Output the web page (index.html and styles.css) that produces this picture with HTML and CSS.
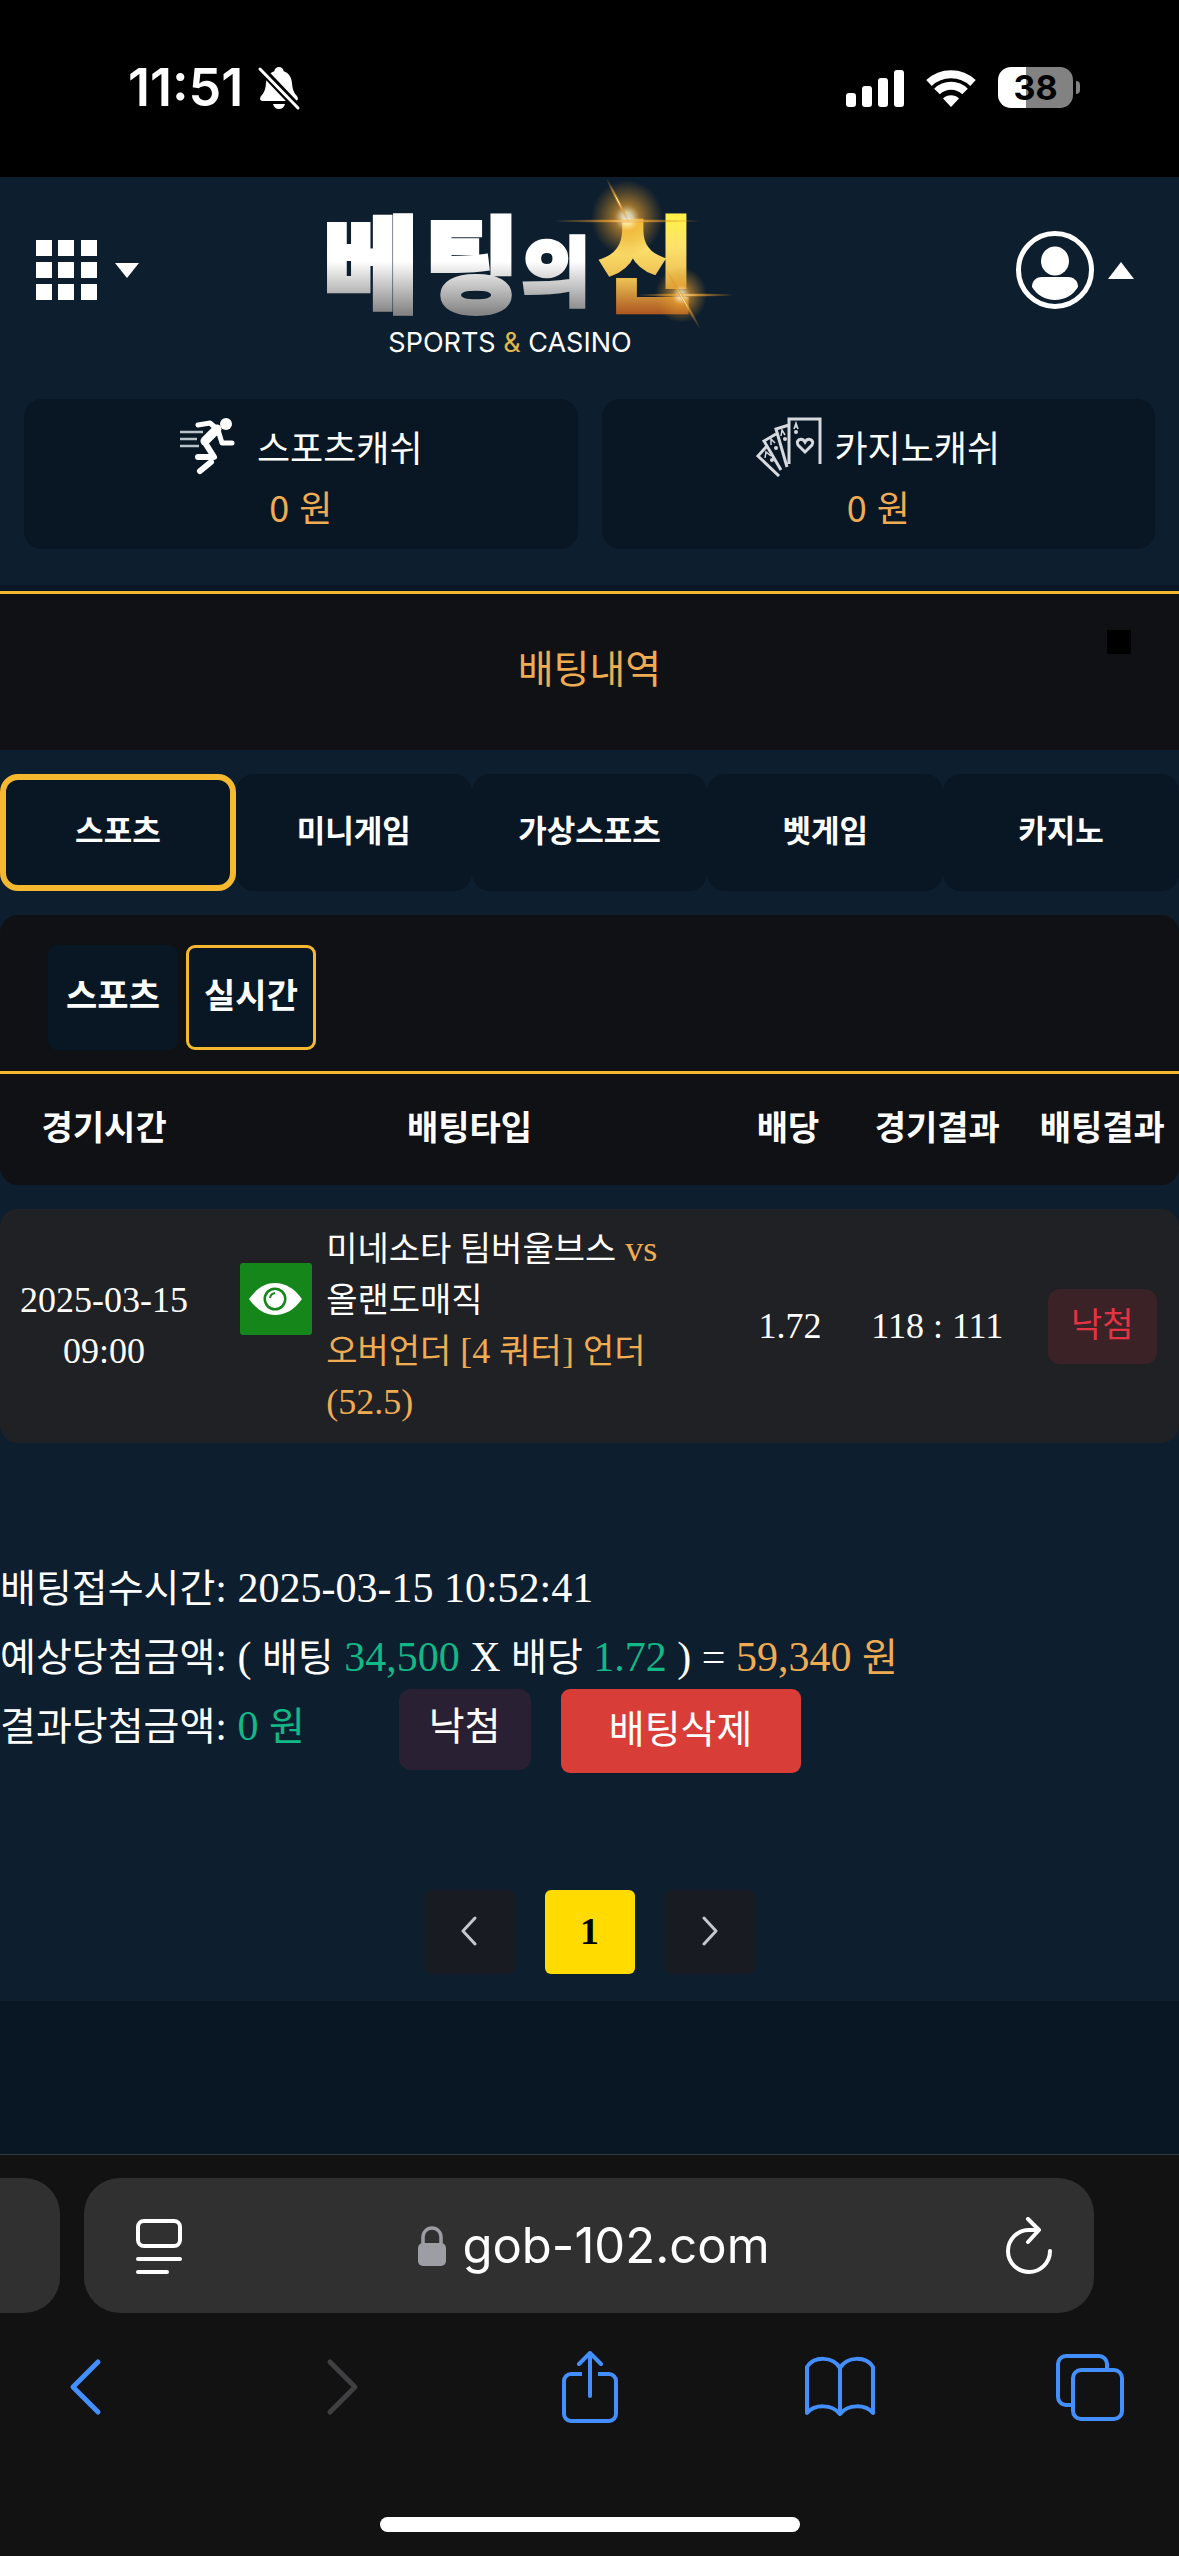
FILE: index.html
```html
<!DOCTYPE html>
<html lang="ko">
<head>
<meta charset="utf-8">
<meta name="viewport" content="width=device-width">
<title>배팅내역</title>
<link rel="stylesheet" href="styles.css">
</head>
<body>
<div class="status">
  <div class="status-side">
    <span class="clock">11:51</span>
    <svg width="44" height="46" viewBox="0 0 44 46" aria-hidden="true">
      <path fill="#fff" d="M22 2c2.600 0 4.500 1.800 4.700 4.200C32 8 34.500 12.500 35 18c.5 6 1.500 9 4.500 12.500 2.500 3 1.500 5.500-1.500 5.500H6c-3 0-4-2.500-1.500-5.500C7.500 27 8.500 24 9 18c.5-5.500 3-10 8.300-11.800C17.500 3.800 19.400 2 22 2zM16 39h12c-.6 3-3 5-6 5s-5.400-2-6-5z"/>
      <path stroke="#000" stroke-width="8" d="M3 3l39 41"/>
      <path stroke="#fff" stroke-width="3" stroke-linecap="round" d="M3 4l38 39"/>
    </svg>
  </div>
  <div class="status-side status-right">
    <svg width="58" height="38" viewBox="0 0 58 38" fill="#fff" aria-hidden="true"><rect y="24" width="10" height="14" rx="3"/><rect x="16" y="17" width="10" height="21" rx="3"/><rect x="32" y="9" width="10" height="29" rx="3"/><rect x="48" y="1" width="10" height="37" rx="3"/></svg>
    <svg width="50" height="38" viewBox="0 0 50 38" fill="none" stroke="#fff" aria-hidden="true"><path stroke-width="8" d="M3 14a32 32 0 0 1 44 0"/><path stroke-width="8" d="M11 22.500a20 20 0 0 1 28 0"/><path fill="#fff" stroke="none" d="M25 38l-8-8.500a11.500 11.500 0 0 1 16 0z"/></svg>
    <div class="battery"><span class="battery-level">38</span></div>
  </div>
</div>

<main class="page">
  <header class="top">
    <button class="icon-btn" aria-label="메뉴">
      <svg width="61" height="60" viewBox="0 0 61 60" fill="#fff"><path d="M0 0h16v16H0zM22 0h16v16H22zM45 0h16v16H45zM0 22h16v16H0zM22 22h16v16H22zM45 22h16v16H45zM0 44h16v16H0zM22 44h16v16H22zM45 44h16v16H45z"/></svg>
      <svg width="24" height="15" viewBox="0 0 24 15" fill="#fff"><path d="M0 0h24L12 15z"/></svg>
    </button>
    <a href="#" class="logo" aria-label="베팅의신">
      <svg width="578" height="186" viewBox="0 0 578 186">
        <defs>
          <linearGradient id="silver" gradientUnits="userSpaceOnUse" x1="0" y1="42" x2="0" y2="136"><stop offset=".45" stop-color="#fff"/><stop offset="1" stop-color="#858585"/></linearGradient>
          <linearGradient id="gold" gradientUnits="userSpaceOnUse" x1="0" y1="42" x2="0" y2="136"><stop offset="0" stop-color="#fff04a"/><stop offset=".3" stop-color="#ffe16c"/><stop offset=".66" stop-color="#e9bb50"/><stop offset="1" stop-color="#ad5a22"/></linearGradient>
          <radialGradient id="glow"><stop offset="0" stop-color="#fff"/><stop offset=".15" stop-color="#ffe9b0"/><stop offset=".35" stop-color="#e9a030" stop-opacity=".75"/><stop offset="1" stop-color="#c98a20" stop-opacity="0"/></radialGradient>
        </defs>
        <g class="logo-word">
          <text x="27" y="127" font-size="104" fill="url(#silver)" stroke="url(#silver)">베</text>
          <text x="128" y="127" font-size="104" fill="url(#silver)" stroke="url(#silver)">팅</text>
          <text x="226" y="122" font-size="74" fill="url(#silver)" stroke="url(#silver)">의</text>
          <text x="303" y="127" font-size="104" fill="url(#gold)" stroke="url(#gold)">신</text>
        </g>
        <ellipse cx="331" cy="41" rx="36" ry="38" fill="url(#glow)" opacity=".85"/>
        <ellipse cx="331" cy="44" rx="76" ry="2" fill="url(#glow)"/>
        <ellipse cx="322" cy="24" rx="2" ry="26" fill="url(#glow)" transform="rotate(-27 322 24)"/>
        <ellipse cx="385" cy="118" rx="26" ry="28" fill="url(#glow)" opacity=".8"/>
        <ellipse cx="390" cy="118" rx="50" ry="2" fill="url(#glow)"/>
        <ellipse cx="387" cy="122" rx="2" ry="36" fill="url(#glow)" transform="rotate(-30 387 122)"/>
        <text class="logo-tag" x="214" y="175" text-anchor="middle" fill="#fff">SPORTS <tspan fill="#e0b84c">&amp;</tspan> CASINO</text>
      </svg>
    </a>
    <button class="icon-btn icon-btn-user" aria-label="내 정보">
      <svg width="80" height="80" viewBox="0 0 80 80"><circle cx="40" cy="40" r="36.500" fill="none" stroke="#fff" stroke-width="5"/><ellipse cx="40" cy="31" rx="14" ry="14.500" fill="#fff"/><path fill="#fff" d="M17 57c0-7 5-10 10-10h26c5 0 10 3 10 10-5 8-13 13-23 13s-18-5-23-13z"/></svg>
      <svg width="26" height="17" viewBox="0 0 26 17" fill="#fff"><path d="M0 17h26L13 0z"/></svg>
    </button>
  </header>

  <section class="wallets">
    <div class="wallet">
      <div class="wallet-name">
        <svg width="66" height="60" viewBox="0 0 66 60" fill="none" stroke="#fff" stroke-linecap="round" stroke-linejoin="round" aria-hidden="true"><circle cx="47" cy="7" r="6" fill="#fff" stroke="none"/><path stroke-width="5" d="M19 8l12-2 8 7 4 13h10"/><path stroke-width="9" d="M38 12L26 24"/><path stroke-width="6" d="M25 24l10 16H19M32 45L21 54"/><g stroke="#b9c2ca" stroke-width="2.500" stroke-linecap="butt"><path d="M1 15h23M1 22h17M1 29h19"/></g></svg>
        <span>스포츠캐쉬</span>
      </div>
      <div class="wallet-sum">0 원</div>
    </div>
    <div class="wallet">
      <div class="wallet-name">
        <svg width="66" height="60" viewBox="0 0 66 60" fill="none" stroke="#d6d9dd" stroke-width="3" aria-hidden="true"><path d="M33 47V2h31v45M31 50L20 12l13-4M25 53L8 24l12-7M23 59L2 39l9-10"/><path d="M49 35l-7-7c-3-5 4-8 7-3 3-5 10-2 7 3z"/><path stroke-width="1.500" d="M38 12l2-6 2 6m-3-2h2M25 19l1-6 3 5M15 28v-6l4 4M9 41l1-6 5 4"/><g fill="#d6d9dd" stroke="none"><circle cx="40" cy="15" r="2"/><circle cx="29" cy="22" r="2"/><circle cx="20" cy="31" r="2"/><circle cx="16" cy="43" r="2"/></g></svg>
        <span>카지노캐쉬</span>
      </div>
      <div class="wallet-sum">0 원</div>
    </div>
  </section>

  <section class="title-bar">
    <h1>배팅내역</h1>
    <span class="marker"></span>
  </section>

  <nav class="tabs">
    <button class="tab tab-on">스포츠</button>
    <button class="tab">미니게임</button>
    <button class="tab">가상스포츠</button>
    <button class="tab">벳게임</button>
    <button class="tab">카지노</button>
  </nav>

  <div class="subtabs">
    <button class="subtab">스포츠</button>
    <button class="subtab subtab-on">실시간</button>
  </div>

  <table class="bets">
    <colgroup><col class="c-time"><col class="c-type"><col class="c-odds"><col class="c-score"><col class="c-result"></colgroup>
    <thead><tr><th>경기시간</th><th>배팅타입</th><th>배당</th><th>경기결과</th><th>배팅결과</th></tr></thead>
    <tbody>
      <tr>
        <td>2025-03-15<br>09:00</td>
        <td>
          <div class="match">
            <svg class="eye" width="72" height="72" viewBox="0 0 72 72" aria-hidden="true"><rect width="72" height="72" rx="3" fill="#14861a"/><path fill="#fff" d="M9 36c8-11 16-16 26-16s19 5 27 16c-8 11-17 16-27 16S17 47 9 36z"/><circle cx="35" cy="36" r="11.500" fill="#14861a"/><circle cx="35" cy="36" r="9" fill="#fff"/><path stroke="#14861a" stroke-width="2" fill="none" d="M30 35a6 6 0 0 1 5-5"/></svg>
            <div>
              <div><span class="ko">미네소타 팀버울브스</span> <span class="gold">vs</span> <span class="ko">올랜도매직</span></div>
              <div class="gold"><span class="ko">오버언더</span> [4 <span class="ko">쿼터</span>] <span class="ko">언더</span> (52.5)</div>
            </div>
          </div>
        </td>
        <td>1.72</td>
        <td>118 : 111</td>
        <td><span class="badge">낙첨</span></td>
      </tr>
    </tbody>
  </table>

  <section class="summary">
    <p><span class="ko">배팅접수시간</span>: 2025-03-15 10:52:41</p>
    <p><span class="ko">예상당첨금액</span>: ( <span class="ko">배팅</span> <span class="green">34,500</span> X <span class="ko">배당</span> <span class="green">1.72</span> ) = <span class="gold">59,340 <span class="ko">원</span></span></p>
    <div class="summary-last">
      <p><span class="ko">결과당첨금액</span>: <span class="green">0 <span class="ko">원</span></span></p>
      <span class="outcome">낙첨</span>
      <button class="delete">배팅삭제</button>
    </div>
  </section>

  <nav class="pager" aria-label="페이지">
    <button class="page-btn" aria-label="이전"><svg width="18" height="30" viewBox="0 0 18 30" fill="none" stroke="#c3c8cf" stroke-width="3" stroke-linecap="round" stroke-linejoin="round"><path d="M14 2L2 15l12 13"/></svg></button>
    <button class="page-btn page-on">1</button>
    <button class="page-btn" aria-label="다음"><svg width="18" height="30" viewBox="0 0 18 30" fill="none" stroke="#c3c8cf" stroke-width="3" stroke-linecap="round" stroke-linejoin="round"><path d="M3 2l12 13L3 28"/></svg></button>
  </nav>
</main>

<footer class="browser">
  <div class="address-row">
    <div class="prev-tab"></div>
    <div class="address">
      <button class="icon-btn" aria-label="페이지 메뉴"><svg width="46" height="56" viewBox="0 0 46 56" fill="none" stroke="#fff" stroke-width="4" stroke-linecap="round"><rect x="2" y="3" width="42" height="25" rx="6"/><path d="M2 41h42M2 54h29"/></svg></button>
      <button class="address-text">
        <svg width="28" height="40" viewBox="0 0 28 40"><rect y="17" width="28" height="23" rx="5" fill="#9d9da4"/><path d="M5 18v-7a9 9 0 0 1 18 0v7" fill="none" stroke="#9d9da4" stroke-width="3.500"/></svg>
        <span>gob-102.com</span>
      </button>
      <button class="icon-btn" aria-label="새로고침"><svg width="46" height="58" viewBox="0 0 46 58" fill="none" stroke="#fff" stroke-width="4" stroke-linecap="round" stroke-linejoin="round"><path d="M44 34a21 21 0 1 1-21-21h9M22 2l11 11-11 12"/></svg></button>
    </div>
  </div>
  <nav class="tools">
    <button class="icon-btn" aria-label="뒤로"><svg width="72" height="72" viewBox="0 0 72 72" fill="none" stroke="#448fff" stroke-width="5" stroke-linecap="round" stroke-linejoin="round"><path d="M47 11L22 36l25 25"/></svg></button>
    <button class="icon-btn" aria-label="앞으로"><svg width="72" height="72" viewBox="0 0 72 72" fill="none" stroke="#404043" stroke-width="5" stroke-linecap="round" stroke-linejoin="round"><path d="M28 11l25 25-25 25"/></svg></button>
    <button class="icon-btn" aria-label="공유"><svg width="72" height="72" viewBox="0 0 72 72" fill="none" stroke="#448fff" stroke-width="4" stroke-linecap="round" stroke-linejoin="round"><path stroke-linecap="butt" d="M28 23H17a7 7 0 0 0-7 7v33a7 7 0 0 0 7 7h38a7 7 0 0 0 7-7V30a7 7 0 0 0-7-7H44"/><path d="M36 45V2M25 13L36 2l11 11"/></svg></button>
    <button class="icon-btn" aria-label="책갈피"><svg width="72" height="72" viewBox="0 0 72 72" fill="none" stroke="#448fff" stroke-width="4" stroke-linejoin="round"><path d="M35 17C28 5 9 5 2 16v46c8-9 25-9 33 1 8-10 25-10 33-1V16C61 5 42 5 35 17zM35 17v46"/></svg></button>
    <button class="icon-btn" aria-label="탭"><svg width="72" height="72" viewBox="0 0 72 72" fill="none" stroke="#448fff" stroke-width="4" stroke-linejoin="round"><path d="M17 54h-7a8 8 0 0 1-8-8V13a8 8 0 0 1 8-8h33a8 8 0 0 1 8 8v5"/><rect x="17" y="19" width="49" height="49" rx="8"/></svg></button>
  </nav>
  <div class="home-bar"></div>
</footer>
</body>
</html>
```

FILE: styles.css
```css
* { box-sizing: border-box; }

body {
  margin: 0;
  min-height: 100vh;
  display: flex;
  flex-direction: column;
  background: #091725;
  color: #fff;
  font-family: "Noto Sans CJK KR", sans-serif;
}

button {
  margin: 0;
  padding: 0;
  border: 0;
  background: none;
  color: inherit;
  font: inherit;
}

svg { display: block; flex: none; }
p, h1 { margin: 0; font-weight: 400; }

.gold { color: #efac53; }
.green { color: #12b886; }

/* Phone status bar */
.status {
  display: flex;
  justify-content: space-between;
  align-items: center;
  height: 177px;
  padding: 0 106px 2px 128px;
  background: #000;
  font-family: Inter, sans-serif;
}
.status-side { display: flex; align-items: center; gap: 14px; }
.status-right { gap: 22px; }
.clock { font-size: 52px; font-weight: 600; }
.battery {
  position: relative;
  width: 75px;
  height: 41px;
  border-radius: 13px;
  background: linear-gradient(90deg, #fff 38%, #828282 38%);
}
.battery::after {
  content: "";
  position: absolute;
  top: 14px;
  right: -7px;
  width: 4px;
  height: 13px;
  border-radius: 0 4px 4px 0;
  background: #828282;
}
.battery-level {
  display: block;
  color: #000;
  font-size: 34px;
  font-weight: 700;
  line-height: 41px;
  text-align: center;
}

/* Site header */
.page { padding-bottom: 27px; background: #0d1e2f; }
.icon-btn { display: flex; align-items: center; gap: 18px; }
.icon-btn-user { gap: 13px; }
.top {
  display: grid;
  grid-template-columns: 1fr auto 1fr;
  align-items: center;
  padding: 0 45px 0 36px;
}
.icon-btn-user { justify-self: end; }
.logo-word {
  font-family: "Noto Sans CJK KR", sans-serif;
  font-weight: 900;
  stroke-width: 4px;
}
.logo-tag { font-family: Inter, sans-serif; font-size: 27px; }

.wallets {
  display: grid;
  grid-template-columns: 1fr 1fr;
  gap: 24px;
  padding: 36px 24px;
}
.wallet {
  padding: 18px 0 14px;
  border-radius: 18px;
  background: #091725;
  font-size: 36px;
  line-height: 58px;
  text-align: center;
}
.wallet-name { display: flex; justify-content: center; gap: 12px; }
.wallet-sum { color: #efac53; }

.title-bar {
  position: relative;
  border-top: 3px solid #f6b82f;
  outline: 6px solid #091725;
  clip-path: inset(-6px 0 0 0);
  margin-top: 6px;
  padding: 38px 0 49px;
  background: #101114;
  text-align: center;
}
.title-bar h1 { color: #efac53; font-size: 39px; line-height: 69px; }
.marker {
  position: absolute;
  top: 36px;
  right: 48px;
  width: 24px;
  height: 24px;
  background: #000;
}

/* Category tabs */
.tabs {
  display: grid;
  grid-template-columns: repeat(5, 1fr);
  margin: 24px 0;
}
.tab {
  height: 117px;
  padding-bottom: 8px;
  border: 6px solid transparent;
  border-radius: 18px;
  background: #091725 border-box;
  font-size: 31px;
  font-weight: 700;
}
.tab-on { border-color: #f6b82f; }

.subtabs {
  display: flex;
  gap: 8px;
  padding: 30px 48px 21px;
  border-bottom: 3px solid #f6b82f;
  border-radius: 18px 18px 0 0;
  background: #101114;
}
.subtab {
  width: 130px;
  height: 105px;
  padding-bottom: 8px;
  border: 3px solid transparent;
  border-radius: 9px;
  background: #091725 border-box;
  font-size: 34px;
  font-weight: 700;
}
.subtab-on { border-color: #f6b82f; }

/* Bet table */
.bets {
  width: 100%;
  table-layout: fixed;
  border-spacing: 0;
  font-family: "Liberation Serif", "Noto Sans CJK KR", serif;
  font-size: 36px;
  line-height: 51px;
  text-align: center;
}
.c-time { width: 18%; }
.c-type { width: 44%; }
.c-odds { width: 10%; }
.c-score { width: 15%; }
.c-result { width: 13%; }
.bets th {
  height: 111px;
  padding: 0 4px 8px 0;
  background: #101114;
  font-family: "Noto Sans CJK KR", sans-serif;
  font-size: 34px;
  white-space: nowrap;
}
.bets th:nth-child(n+4) { padding-right: 0; }
.bets th:first-child { border-bottom-left-radius: 18px; }
.bets th:last-child { border-bottom-right-radius: 18px; }
.bets tbody::before { content: ""; display: block; height: 24px; }
.bets td { padding: 15px 0; background: #202124; }
.bets td:first-child { padding-right: 4px; border-radius: 18px 0 0 18px; }
.bets td:last-child { border-radius: 0 18px 18px 0; }
.bets .ko { font-size: 34px; line-height: 1; }
.match {
  display: flex;
  gap: 14px;
  padding: 0 60px 0 28px;
  text-align: left;
}
.eye { margin-top: 39px; }
.badge {
  display: inline-block;
  padding: 8px 23px 16px;
  border-radius: 12px;
  background: #3a2226;
  color: #e23445;
  font-family: "Noto Sans CJK KR", sans-serif;
  font-size: 34px;
}

/* Bet summary */
.summary {
  padding: 111px 0 117px;
  font-family: "Liberation Serif", "Noto Sans CJK KR", serif;
  font-size: 42px;
  line-height: 69px;
}
.summary .ko { font-size: 39px; line-height: 1; }
.summary-last {
  display: flex;
  align-items: flex-start;
  font-family: "Noto Sans CJK KR", sans-serif;
  font-size: 39px;
}
.summary-last p { font-family: "Liberation Serif", "Noto Sans CJK KR", serif; font-size: 42px; }
.outcome {
  margin: -3px 30px 0 94px;
  padding: 0 30px 12px;
  border-radius: 12px;
  background: #292133;
}
.delete {
  width: 240px;
  height: 84px;
  margin-top: -3px;
  padding-bottom: 10px;
  border-radius: 9px;
  background: #d93d38;
}

.pager { display: flex; justify-content: center; gap: 30px; }
.page-btn {
  display: flex;
  justify-content: center;
  align-items: center;
  width: 90px;
  height: 84px;
  padding-bottom: 2px;
  border-radius: 6px;
  background: #181b21;
}
.page-on {
  background: #ffdb00;
  color: #000;
  font: 700 38px "Liberation Serif", serif;
}

/* Browser chrome */
.browser {
  margin-top: auto;
  padding: 23px 0 24px;
  border-top: 1px solid #38393b;
  background: #121212;
}
.address-row { display: flex; gap: 24px; padding-right: 85px; }
.prev-tab {
  width: 60px;
  border-radius: 0 36px 36px 0;
  background: #303030;
}
.address {
  flex: 1;
  display: flex;
  justify-content: space-between;
  align-items: center;
  height: 135px;
  padding: 0 42px 0 52px;
  border-radius: 36px;
  background: #303030;
}
.address-text {
  display: flex;
  align-items: center;
  gap: 16px;
  font-family: Inter, sans-serif;
  font-size: 49px;
}
.tools {
  display: flex;
  justify-content: space-between;
  padding: 38px 51px 0;
}
.home-bar {
  width: 420px;
  height: 15px;
  margin: 94px auto 0;
  border-radius: 8px;
  background: #fff;
}
```
